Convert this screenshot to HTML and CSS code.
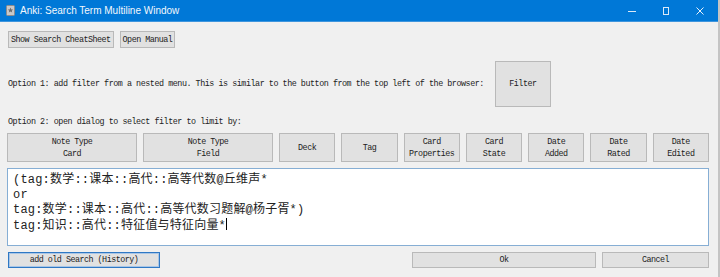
FILE: index.html
```html
<!DOCTYPE html>
<html lang="en">
<head>
    <meta charset="UTF-8">
    <title>Anki: Search Term Multiline Window</title>
    <link rel="stylesheet" href="styles.css">
</head>
<body>
    <div class="window">
        <div class="titlebar">
            <svg class="app-icon" width="9" height="11" viewBox="0 0 9 11">
                <rect x="0.5" y="0.5" width="8" height="10" rx="1" fill="#c9c9c9" stroke="#8c8c8c"/>
                <path d="M4.5 2.5 L5.3 4.4 L7.2 4.5 L5.7 5.7 L6.2 7.6 L4.5 6.5 L2.8 7.6 L3.3 5.7 L1.8 4.5 L3.7 4.4 Z" fill="#6b6b6b"/>
            </svg>
            <span class="title">Anki: Search Term Multiline Window</span>
            <div class="controls">
                <svg width="8" height="8" viewBox="0 0 8 8"><path d="M0 4.5 H8" stroke="#dbe9f7" stroke-width="1"/></svg>
                <svg width="8" height="8" viewBox="0 0 8 8"><rect x="1.5" y="0.5" width="5" height="7" fill="none" stroke="#dbe9f7"/></svg>
                <svg width="8" height="8" viewBox="0 0 8 8"><path d="M0.5 0.5 L7.5 7.5 M7.5 0.5 L0.5 7.5" stroke="#e6f0fa" stroke-width="1"/></svg>
            </div>
        </div>

        <div class="content">
            <div class="top-row">
                <button class="btn">Show Search CheatSheet</button>
                <button class="btn">Open Manual</button>
            </div>

            <div class="option-row">
                <span class="label">Option 1: add filter from a nested menu. This is similar to the button from the top left of the browser:</span>
                <button class="btn filter-btn">Filter</button>
            </div>

            <div class="label option2">Option 2: open dialog to select filter to limit by:</div>

            <div class="filter-row">
                <button class="btn wide">Note Type<br>Card</button>
                <button class="btn wide">Note Type<br>Field</button>
                <button class="btn">Deck</button>
                <button class="btn">Tag</button>
                <button class="btn">Card<br>Properties</button>
                <button class="btn">Card<br>State</button>
                <button class="btn">Date<br>Added</button>
                <button class="btn">Date<br>Rated</button>
                <button class="btn">Date<br>Edited</button>
            </div>

            <div class="editor">
                <div>(tag:数学::课本::高代::高等代数@丘维声*</div>
                <div>or</div>
                <div>tag:数学::课本::高代::高等代数习题解@杨子胥*)</div>
                <div>tag:知识::高代::特征值与特征向量*<span class="caret"></span></div>
            </div>

            <div class="bottom-row">
                <button class="btn history">add old Search (History)</button>
                <div class="spacer"></div>
                <button class="btn ok">Ok</button>
                <button class="btn cancel">Cancel</button>
            </div>
        </div>
    </div>
</body>
</html>
```

FILE: styles.css
```css
body {
    margin: 0;
    padding: 0;
    background-color: #f0f0f0;
}
.window {
    width: 720px;
    height: 277px;
    background-color: #f0f0f0;
    border-right: 2px solid #c4c4c4;
    box-sizing: border-box;
    overflow: hidden;
}
.titlebar {
    height: 21px;
    background-color: #0078d7;
    border-bottom: 1px solid #3f95dd;
    display: flex;
    align-items: center;
    padding-left: 6px;
    color: #ffffff;
}
.app-icon {
    margin-right: 5px;
}
.title {
    font-family: "Liberation Sans", sans-serif;
    font-size: 10px;
    color: #f2f7fc;
}
.controls {
    margin-left: auto;
    display: flex;
    gap: 26px;
    padding-right: 14px;
}
.content {
    padding: 9px 9px 0 8px;
}
.btn {
    font-family: "Liberation Mono", monospace;
    font-size: 8.4px;
    letter-spacing: -0.5px;
    color: #222;
    background-color: #e1e1e1;
    border: 1px solid #b9b9b9;
    padding: 0 2px;
    margin: 0;
    line-height: 12px;
    cursor: pointer;
}
.top-row {
    display: flex;
    gap: 6px;
}
.top-row .btn {
    height: 17px;
}
.label {
    font-family: "Liberation Mono", monospace;
    font-size: 8.4px;
    letter-spacing: -0.45px;
    color: #222;
}
.option-row {
    display: flex;
    align-items: center;
    margin-top: 13px;
    gap: 11px;
}
.filter-btn {
    width: 56px;
    height: 46px;
}
.option2 {
    margin-top: 10px;
    height: 16px;
}
.filter-row {
    display: flex;
    gap: 6px;
    margin-left: -1px;
}
.filter-row .btn {
    flex: 1;
    height: 29px;
}
.filter-row .wide {
    flex: 0 0 130px;
}
.editor {
    margin-top: 6px;
    margin-left: -1px;
    height: 78px;
    background-color: #ffffff;
    border: 1px solid #86aed4;
    padding: 4px 5px;
    box-sizing: border-box;
    font-family: "Liberation Mono", "Noto Sans CJK SC", monospace;
    font-size: 12px;
    letter-spacing: 0.2px;
    line-height: 15px;
    color: #222;
}
.caret {
    display: inline-block;
    width: 1px;
    height: 12px;
    background-color: #000;
    vertical-align: -1px;
}
.bottom-row {
    display: flex;
    margin-top: 6px;
    gap: 6px;
}
.bottom-row .btn {
    height: 16px;
}
.history {
    width: 152px;
    border: 1px solid #2f78c4;
    box-shadow: inset 0 0 0 1px #a9c6e6;
}
.spacer {
    flex: 1;
}
.ok {
    width: 184px;
}
.cancel {
    width: 107px;
}
```
